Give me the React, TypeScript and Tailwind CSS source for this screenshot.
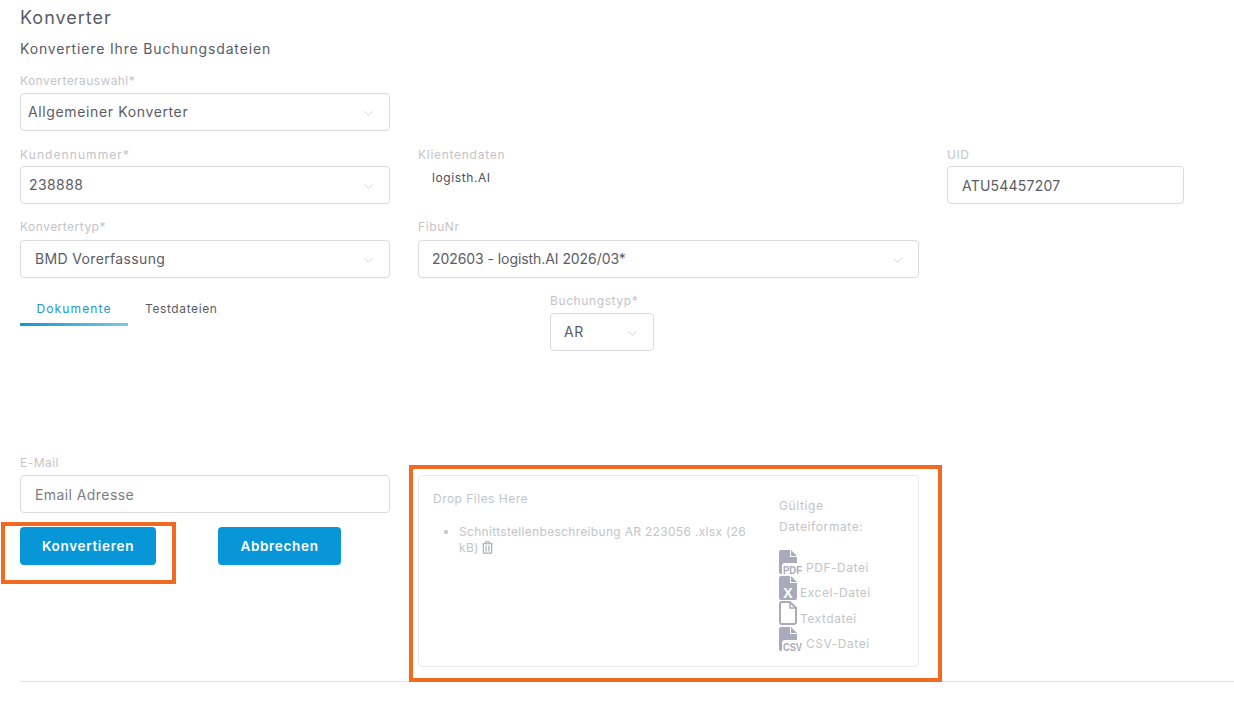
import { ChevronDown } from "lucide-react";
import { FaRegTrashAlt } from "react-icons/fa";

const fontCls = "font-['Inter','Liberation_Sans',sans-serif]";

function Label({ children, className = "tracking-[0.05em]" }: { children: React.ReactNode; className?: string }) {
  return <div className={`h-[13px] text-[12px] leading-[13px] text-[#c3c4c9] ${className}`}>{children}</div>;
}

function SelectBox({ value, mt = "mt-[6px]", pad = "pl-[14px]", track = "tracking-[0.025em]" }: { value: string; mt?: string; pad?: string; track?: string }) {
  return (
    <div className={`flex h-[38px] items-center justify-between rounded-[4px] border border-[#d9dadd] bg-white pr-[13px] text-[14px] text-[#5b5c66] ${mt} ${pad}`}>
      <span className={`-mt-px ${track}`}>{value}</span>
      <ChevronDown className="mt-[3px] h-[15px] w-[15px] text-[#c4c5ca]" strokeWidth={1.2} />
    </div>
  );
}

function FileIcon({ kind }: { kind: "pdf" | "x" | "txt" | "csv" }) {
  if (kind === "txt") {
    return (
      <svg width="18" height="24" viewBox="0 0 18 24" className="shrink-0">
        <path d="M3 1h8l6 6v14a2 2 0 0 1-2 2H3a2 2 0 0 1-2-2V3a2 2 0 0 1 2-2z" fill="none" stroke="#a9abbc" strokeWidth="2" />
        <path d="M11 1v6h6" fill="none" stroke="#a9abbc" strokeWidth="1.5" />
      </svg>
    );
  }
  if (kind === "x") {
    return (
      <svg width="18" height="24" viewBox="0 0 18 24" className="shrink-0 tracking-normal">
        <path d="M2 0h9v7h7v15a2 2 0 0 1-2 2H2a2 2 0 0 1-2-2V2a2 2 0 0 1 2-2z" fill="#a9abbc" />
        <path d="M12 0l6 6h-6z" fill="#a9abbc" />
        <text x="9" y="21.5" textAnchor="middle" fontSize="14" fontWeight="700" fill="#ffffff" fontFamily="Liberation Sans">X</text>
      </svg>
    );
  }
  return (
    <svg width="25" height="24" viewBox="0 0 25 24" className="shrink-0 tracking-normal">
      <path d="M2 0h9v7h7v6H6a3 3 0 0 0-3 3v8H2a2 2 0 0 1-2-2V2a2 2 0 0 1 2-2z" fill="#a9abbc" />
      <path d="M12 0l6 6h-6z" fill="#a9abbc" />
      <text x="4" y="23.5" fontSize="10" fontWeight="700" fill="#a9abbc" fontFamily="Liberation Sans" textLength="19" lengthAdjust="spacingAndGlyphs">
        {kind === "pdf" ? "PDF" : "CSV"}
      </text>
    </svg>
  );
}

function Format({ kind, label, gap }: { kind: "pdf" | "x" | "txt" | "csv"; label: string; gap: string }) {
  return (
    <div className={`flex h-[25.5px] items-start ${gap} text-[12px] leading-[18px] text-[#c3c4c9] tracking-[0.045em]`}>
      <FileIcon kind={kind} />
      <span className="mt-[8.5px]">{label}</span>
    </div>
  );
}

export default function App() {
  return (
    <div className={`${fontCls} relative h-[706px] w-[1234px] overflow-hidden bg-white pl-5`}>
      <h1 className="pt-[7px] text-[18px] font-normal leading-[21px] tracking-[0.055em] text-[#5a5b66]">Konverter</h1>
      <h2 className="mt-[11px] text-[14px] font-normal leading-[20px] tracking-[0.06em] text-[#5a5b66]">Konvertiere Ihre Buchungsdateien</h2>

      <div className="mt-[15px] w-[370px]">
        <Label className="tracking-[0.035em]">Konverterauswahl*</Label>
        <SelectBox value="Allgemeiner Konverter" pad="pl-[7px]" track="tracking-[0.045em]" />
      </div>

      <div className="mt-[17px] grid grid-cols-[370px_501px_237px] gap-x-7">
        <div>
          <Label className="tracking-[0.09em]">Kundennummer*</Label>
          <SelectBox value="238888" mt="mt-[5px]" pad="pl-[8px]" track="tracking-[0.03em]" />
        </div>
        <div>
          <Label className="tracking-[0.06em]">Klientendaten</Label>
          <div className="mt-[8px] pl-[14px] text-[12px] leading-[18px] tracking-[0.05em] text-[#4d4e58]">logisth.AI</div>
        </div>
        <div>
          <Label>UID</Label>
          <div className="mt-[5px] flex h-[38px] items-center rounded-[4px] border border-[#d9dadd] pl-[14px] text-[14px] tracking-[0.015em] text-[#5b5c66]">ATU54457207</div>
        </div>
      </div>

      <div className="mt-[16px] grid grid-cols-[370px_501px] gap-x-7">
        <div>
          <Label className="tracking-[0.04em]">Konvertertyp*</Label>
          <SelectBox value="BMD Vorerfassung" mt="mt-[7px]" />
        </div>
        <div>
          <Label>FibuNr</Label>
          <SelectBox value="202603 - logisth.AI 2026/03*" mt="mt-[7px]" pad="pl-[13px]" track="tracking-[-0.005em]" />
        </div>
      </div>

      <div className="mt-[16px] flex h-[112px] items-start">
        <div className="w-[530px]">
          <div className="flex h-[32px] text-[12px]">
            <div className="flex w-[108px] items-center justify-center border-b-[3px] border-transparent tracking-[0.095em] text-[#1b98d5] [border-image:linear-gradient(90deg,#0d96d6,#7fc8e6)_1]">Dokumente</div>
            <div className="ml-[17px] flex items-center border-b-[3px] border-transparent tracking-[0.05em] text-[#5a5b66]">Testdateien</div>
          </div>
        </div>
        <div className="w-[104px]">
          <Label className="tracking-[0.05em]">Buchungstyp*</Label>
          <SelectBox value="AR" mt="mt-[6px]" pad="pl-[13px]" track="tracking-[0.05em]" />
        </div>
      </div>

      <div className="mt-[50px] flex gap-x-7">
        <div className="w-[370px]">
          <Label className="tracking-[0.04em]">E-Mail</Label>
          <div className="mt-[6px] flex h-[38px] items-center rounded-[4px] border border-[#d9dadd] pl-[14px] text-[14px] tracking-[0.03em] text-[#7c7d86]">Email Adresse</div>
          <div className="mt-[14px] flex gap-x-[62px]">
            <div className="relative">
              <button className="h-[38px] w-[136px] rounded-[4px] bg-[#0796d8] text-[13.5px] font-semibold tracking-[0.05em] text-white">Konvertieren</button>
              <div className="absolute bottom-[-19px] left-[-19px] right-[-20px] top-[-5px] border-4 border-[#f26a21]" />
            </div>
            <button className="h-[38px] w-[123px] rounded-[4px] bg-[#0796d8] text-[13.5px] font-semibold tracking-[0.05em] text-white">Abbrechen</button>
          </div>
        </div>

        <div className="relative mt-[19px] flex h-[192px] w-[501px] rounded-[4px] border border-[#e8e9ec] text-[12px] text-[#c3c4c9]">
          <div className="w-[332px] pl-[14px] pt-[15px]">
            <div className="leading-[16px] tracking-[0.04em]">Drop Files Here</div>
            <ul className="mt-[17px] list-disc pl-[26px] leading-[16px] tracking-[0.026em]">
              <li>
                Schnittstellenbeschreibung AR 223056 .xlsx (26 kB) <FaRegTrashAlt className="inline h-[13px] w-[11px] align-[-2px] text-[#a9abb5]" />
              </li>
            </ul>
          </div>
          <div className="ml-[28px] pt-[19px]">
            <div className="leading-[21px] tracking-[0.05em]">Gültige<br />Dateiformate:</div>
            <div className="mt-[13px] flex flex-col">
              <Format kind="pdf" label="PDF-Datei" gap="gap-[2px]" />
              <Format kind="x" label="Excel-Datei" gap="gap-[3px]" />
              <Format kind="txt" label="Textdatei" gap="gap-[3px]" />
              <Format kind="csv" label="CSV-Datei" gap="gap-[2px]" />
            </div>
          </div>
          <div className="absolute bottom-[-16px] left-[-10px] right-[-24px] top-[-11px] border-4 border-[#f26a21]" />
        </div>
      </div>

      <div className="mt-[14px] h-px bg-[#e3e4e7]" />
    </div>
  );
}
